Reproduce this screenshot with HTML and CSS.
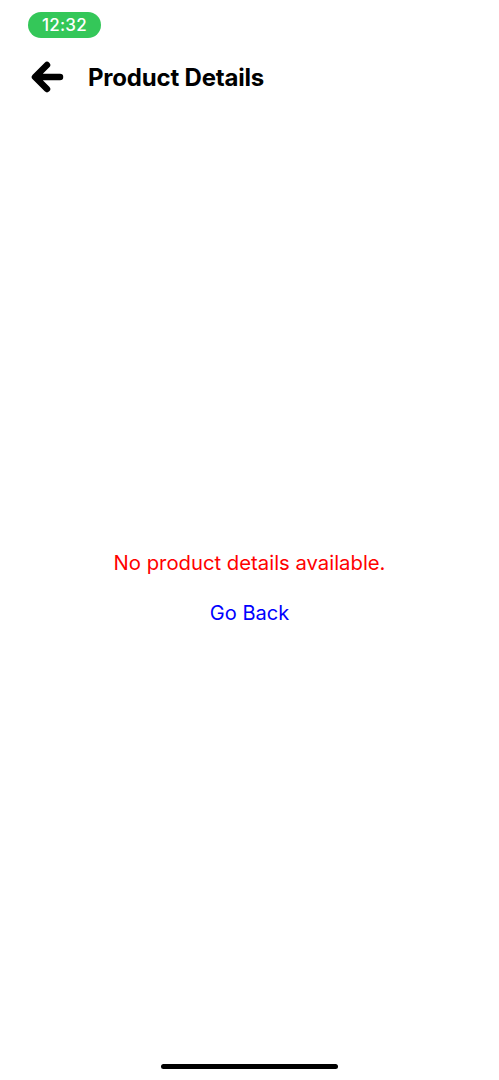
FILE: index.html
```html
<!DOCTYPE html>
<html lang="en">
<head>
<meta charset="utf-8">
<title>Product Details</title>
<link rel="stylesheet" href="styles.css">
</head>
<body>
<div class="screen">
  <div class="status-bar">
    <span class="time-pill">12:32</span>
  </div>
  <header class="nav">
    <button class="back-btn" aria-label="Back">
      <svg width="34" height="36" viewBox="0 0 34 36" aria-hidden="true">
        <path d="M30 18 H6 M17 6 L5 18 L17 30" fill="none" stroke="#000" stroke-width="6.5" stroke-linecap="round" stroke-linejoin="round"/>
      </svg>
    </button>
    <h1 class="title">Product Details</h1>
  </header>
  <main class="content">
    <p class="error">No product details available.</p>
    <a class="link" href="#">Go Back</a>
  </main>
  <div class="home-bar"><span class="home-indicator"></span></div>
</div>
</body>
</html>
```
FILE: styles.css
```css
* { box-sizing: border-box; }
html, body { margin: 0; padding: 0; background: #fff; }
body { font-family: Inter, "Liberation Sans", sans-serif; color: #000; }
.screen {
  width: 499px;
  height: 1080px;
  display: flex;
  flex-direction: column;
}
.status-bar {
  height: 50px;
  padding: 12px 0 0 28px;
}
.time-pill {
  display: inline-flex;
  align-items: center;
  justify-content: center;
  width: 73px;
  height: 26px;
  border-radius: 13px;
  background: #34c759;
  color: #fff;
  font-size: 17px;
  font-weight: 500;
  letter-spacing: 0.2px;
}
.nav {
  display: flex;
  align-items: center;
  height: 54px;
  padding-left: 30px;
}
.back-btn {
  border: 0;
  background: none;
  padding: 0;
  width: 34px;
  height: 36px;
  display: flex;
}
.title {
  margin: 0 0 0 24px;
  font-size: 24px;
  font-weight: 700;
  letter-spacing: -0.2px;
}
.content {
  flex: 1;
  display: flex;
  flex-direction: column;
  align-items: center;
  justify-content: center;
  padding-top: 8px;
}
.error {
  margin: 0;
  color: #f00;
  font-size: 20.3px;
  line-height: 24px;
}
.link {
  margin-top: 26px;
  color: #00f;
  font-size: 20px;
  line-height: 24px;
  text-decoration: none;
}
.home-bar {
  height: 16px;
  display: flex;
  justify-content: center;
}
.home-indicator {
  width: 177px;
  height: 5px;
  border-radius: 3px;
  background: #000;
}
```
